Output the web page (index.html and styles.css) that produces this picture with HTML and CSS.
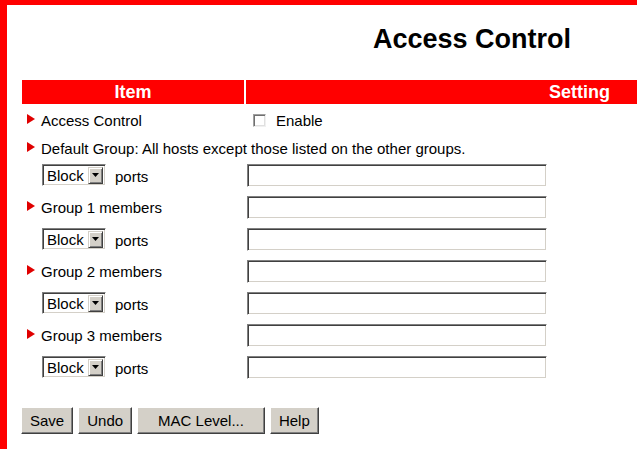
FILE: index.html
```html
<!DOCTYPE html>
<html lang="en">
<head>
    <meta charset="UTF-8">
    <meta name="viewport" content="width=device-width, initial-scale=1.0">
    <title>Access Control</title>
    <link rel="stylesheet" href="styles.css">
</head>
<body>
    <div class="page">
        <h1 class="title">Access Control</h1>

        <div class="row head">
            <div class="cell">Item</div>
            <div class="cell right">Setting</div>
        </div>

        <div class="row first">
            <div class="label"><svg class="arrow" width="8" height="10" viewBox="0 0 8 10"><polygon points="0,0 8,5 0,10"/></svg>Access Control</div>
            <div class="setting"><input type="checkbox" class="check" id="enable"><label for="enable">Enable</label></div>
        </div>

        <div class="row note">
            <div class="label wide"><svg class="arrow" width="8" height="10" viewBox="0 0 8 10"><polygon points="0,0 8,5 0,10"/></svg>Default Group: All hosts except those listed on the other groups.</div>
        </div>
        <div class="row">
            <div class="ports">
                <span class="combo"><select><option>Block</option><option>Allow</option></select><span class="drop"><svg width="7" height="4" viewBox="0 0 7 4"><polygon points="0,0 7,0 3.5,4"/></svg></span></span>ports
            </div>
            <div class="setting"><input type="text" class="field"></div>
        </div>

        <div class="row">
            <div class="label"><svg class="arrow" width="8" height="10" viewBox="0 0 8 10"><polygon points="0,0 8,5 0,10"/></svg>Group 1 members</div>
            <div class="setting"><input type="text" class="field"></div>
        </div>
        <div class="row">
            <div class="ports">
                <span class="combo"><select><option>Block</option><option>Allow</option></select><span class="drop"><svg width="7" height="4" viewBox="0 0 7 4"><polygon points="0,0 7,0 3.5,4"/></svg></span></span>ports
            </div>
            <div class="setting"><input type="text" class="field"></div>
        </div>

        <div class="row">
            <div class="label"><svg class="arrow" width="8" height="10" viewBox="0 0 8 10"><polygon points="0,0 8,5 0,10"/></svg>Group 2 members</div>
            <div class="setting"><input type="text" class="field"></div>
        </div>
        <div class="row">
            <div class="ports">
                <span class="combo"><select><option>Block</option><option>Allow</option></select><span class="drop"><svg width="7" height="4" viewBox="0 0 7 4"><polygon points="0,0 7,0 3.5,4"/></svg></span></span>ports
            </div>
            <div class="setting"><input type="text" class="field"></div>
        </div>

        <div class="row">
            <div class="label"><svg class="arrow" width="8" height="10" viewBox="0 0 8 10"><polygon points="0,0 8,5 0,10"/></svg>Group 3 members</div>
            <div class="setting"><input type="text" class="field"></div>
        </div>
        <div class="row">
            <div class="ports">
                <span class="combo"><select><option>Block</option><option>Allow</option></select><span class="drop"><svg width="7" height="4" viewBox="0 0 7 4"><polygon points="0,0 7,0 3.5,4"/></svg></span></span>ports
            </div>
            <div class="setting"><input type="text" class="field"></div>
        </div>

        <div class="buttons">
            <button type="button">Save</button>
            <button type="button">Undo</button>
            <button type="button" class="big">MAC Level...</button>
            <button type="button">Help</button>
        </div>
    </div>
</body>
</html>
```

FILE: styles.css
```css
html { height: 100%; overflow: hidden; }
body {
    margin: 0;
    min-height: 100%;
    box-sizing: border-box;
    border-left: 7px solid #ff0000;
    border-top: 5px solid #ff0000;
    font-family: "Liberation Sans", Arial, sans-serif;
    font-size: 15px;
    color: #000;
    background: #fff;
    overflow: hidden;
}
.page { padding-left: 15px; }
.title {
    margin: 19px 0 25px;
    padding-right: 66px;
    font-size: 27px;
    line-height: 31px;
    font-weight: bold;
    text-align: right;
}

/* two column rows: item | setting */
.row {
    display: grid;
    grid-template-columns: 222px 1fr;
    column-gap: 2px;
    align-items: center;
    height: 32px;
}
.head {
    height: 24px;
    line-height: 24px;
    font-size: 18px;
    font-weight: bold;
    color: #fff;
    text-align: center;
}
.head .cell { background: #ff0000; }
.head .right { text-align: right; padding-right: 27px; }
.first { height: 28px; margin-top: 2px; }
.note { height: 25px; }
.note .label { padding-top: 3px; }

.label { display: flex; align-items: center; padding-left: 5px; white-space: nowrap; }
.label.wide { grid-column: 1 / -1; }
.arrow { margin: -2px 6px 0 0; fill: #e00000; flex: none; }

.setting { display: flex; align-items: center; }
.setting label { margin-left: 10px; }

/* classic sunken controls */
.field, .check, .combo {
    box-sizing: border-box;
    border: 1px solid;
    border-color: #808080 #ffffff #ffffff #808080;
    box-shadow: inset 1px 1px 0 #404040, inset -1px -1px 0 #d4d0c8;
    background: #fff;
}
.field {
    appearance: none;
    width: 300px;
    height: 23px;
    margin: 0 0 0 1px;
    padding: 2px 4px;
    font: inherit;
    outline: none;
}
.check {
    appearance: none;
    width: 13px;
    height: 13px;
    margin: 0 0 0 7px;
    border-color: #a0a0a0 #f0f0f0 #f0f0f0 #a0a0a0;
    box-shadow: inset 1px 1px 0 #707070, inset -1px -1px 0 #e0e0e0;
}

.ports { display: flex; align-items: center; padding-left: 20px; padding-top: 3px; }
.combo {
    display: flex;
    align-items: center;
    width: 64px;
    height: 22px;
    padding: 2px;
    margin: -3px 9px 0 0;
}
.combo select {
    appearance: none;
    flex: 1;
    min-width: 0;
    border: none;
    background: transparent;
    padding: 0 0 0 2px;
    font: inherit;
    color: #000;
    outline: none;
}
.drop {
    display: flex;
    align-items: center;
    justify-content: center;
    width: 15px;
    height: 17px;
    box-sizing: border-box;
    background: #d4d0c8;
    border: 1px solid;
    border-color: #d4d0c8 #404040 #404040 #d4d0c8;
    box-shadow: inset 1px 1px 0 #fff, inset -1px -1px 0 #808080;
}

.buttons { display: flex; gap: 5px; margin: 24px 0 0 -1px; }
button {
    height: 27px;
    padding: 0 8px;
    font: 15px "Liberation Sans", Arial, sans-serif;
    color: #000;
    background: #d4d0c8;
    border: 1px solid;
    border-color: #ffffff #404040 #404040 #ffffff;
    box-shadow: inset -1px -1px 0 #808080;
}
button.big { padding: 0 20px; }
```
